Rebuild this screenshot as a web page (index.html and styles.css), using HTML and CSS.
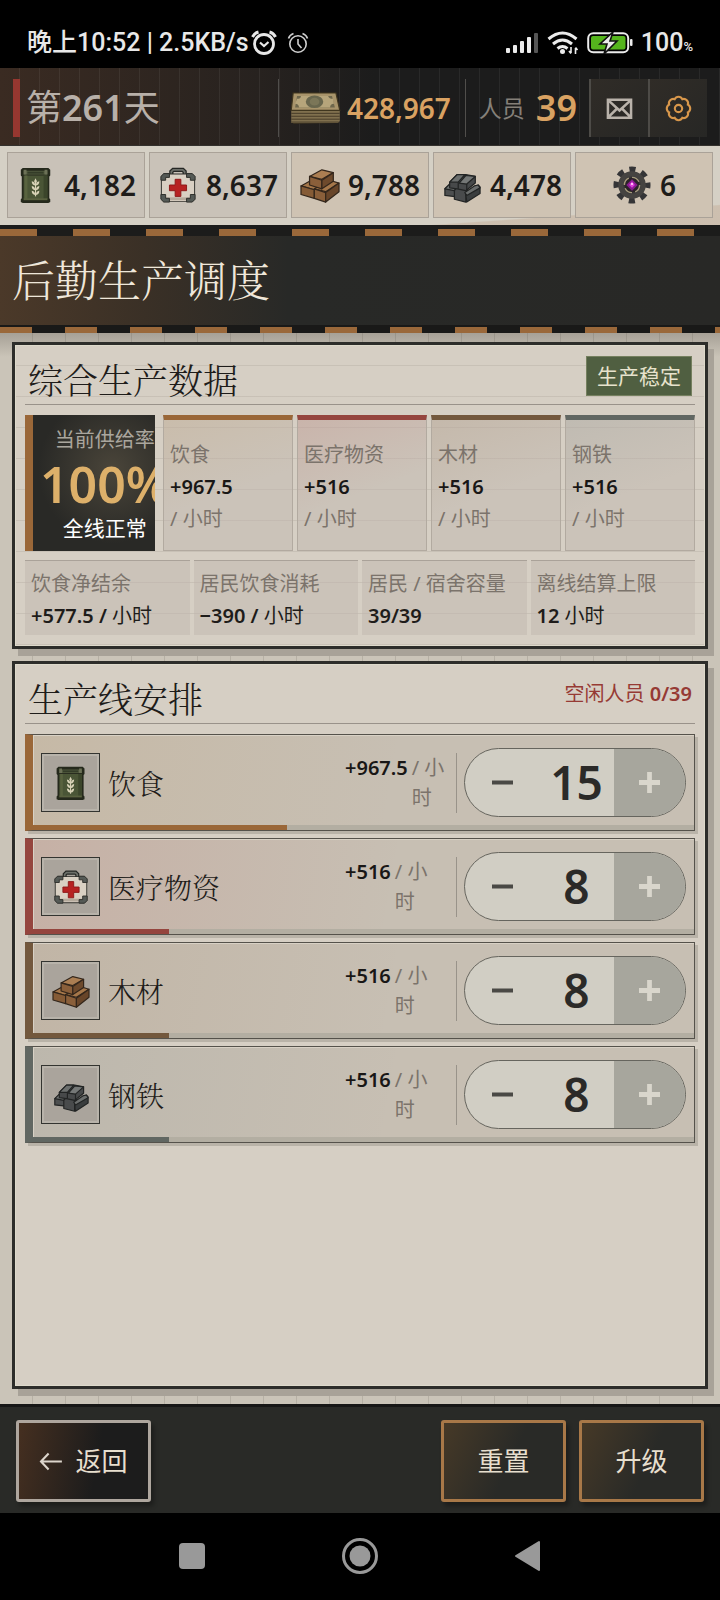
FILE: index.html
```html
<!DOCTYPE html>
<html lang="zh-CN">
<head>
<meta charset="utf-8">
<meta name="viewport" content="width=device-width, initial-scale=1">
<title>后勤生产调度</title>
<link rel="stylesheet" href="styles.css">
</head>
<body>
<svg class="sprite" aria-hidden="true">
  <symbol id="food" viewBox="0 0 40 40">
    <path d="M6 2h27l2 2v6l-1 1v23l1 1v3l-2 1H6l-2-1v-3l1-1V11L4 10V4z" fill="#25291c"/>
    <path d="M7 10h25v25H7z" fill="#4a5536"/>
    <path d="M8 10h3v25H8z" fill="#59633f"/><path d="M28 10h4v25h-4z" fill="#3b452b"/>
    <path d="M7 5h25v4H7z" fill="#525b3f"/><path d="M11 6h17v2H11z" fill="#343c28"/>
    <path d="M7 34h25v2H7z" fill="#59613f"/>
    <path d="M7 4h3v5H7zM29 4h3v5h-3z" fill="#6c7157"/>
    <path d="M19.500 15v17" stroke="#d9d3b8" stroke-width="1.200"/>
    <path d="M19.500 13l1.500 3-1.500 3-1.500-3zM15.500 16q4 1 3.500 4.500-3.500-.5-3.500-4.500zM23.500 16q-4 1-3.500 4.500 3.500-.5 3.500-4.500zM15.500 21q4 1 3.500 4.500-3.500-.5-3.500-4.500zM23.500 21q-4 1-3.500 4.500 3.500-.5 3.500-4.500zM15.500 26q4 1 3.500 4.500-3.500-.5-3.500-4.500zM23.500 26q-4 1-3.500 4.500 3.500-.5 3.500-4.500z" fill="#d9d3b8"/>
  </symbol>
  <symbol id="medic" viewBox="0 0 40 40">
    <path d="M13 9V6l2-2h10l2 2v3" fill="none" stroke="#252724" stroke-width="4.500"/>
    <path d="M13 9V6l2-2h10l2 2v3" fill="none" stroke="#6d706a" stroke-width="1.800"/>
    <path d="M5 8h30l3 3v24l-3 3H5l-3-3V11z" fill="#2c2d29"/>
    <path d="M5 9h30l2 2v24l-2 2H5l-2-2V11z" fill="#d9d0c3"/>
    <path d="M4 33h32v3H4z" fill="#b5aa9c"/>
    <path d="M2 15V11l3-3h6v4H7v3zM38 15V11l-3-3h-6v4h4v3zM2 30v5l3 3h6v-4H7v-4zM38 30v5l-3 3h-6v-4h4v-4z" fill="#555a56" stroke="#2c2d29"/>
    <path d="M17 14h6v6h6v6h-6v6h-6v-6h-6v-6h6z" fill="#b72222" stroke="#8b1818"/>
  </symbol>
  <symbol id="wood" viewBox="0 0 42 40">
    <g stroke="#33261b" stroke-width="1.300" stroke-linejoin="round">
      <path d="M1 21l9-5 9 3v4l-4 2z" fill="#a5774a"/><path d="M1 21l14 4v9L1 30z" fill="#855b36"/>
      <path d="M15 24l16-9 10 3-14 9z" fill="#a5774a"/><path d="M15 24l12 4v10l-12-4z" fill="#8a5f3a"/><path d="M27 28l14-10v9L27 38z" fill="#684529"/>
      <path d="M10 11l13-7 12 3-12 7z" fill="#ab7e52"/><path d="M10 11l13 4v9l-13-4z" fill="#8a5f3a"/><path d="M23 15l12-8v9l-12 8z" fill="#6e4a2c"/>
    </g>
  </symbol>
  <symbol id="steel" viewBox="0 0 42 40">
    <g stroke="#222424" stroke-width="1.300" stroke-linejoin="round">
      <path d="M3 24l5-4h12v13L3 31z" fill="#4d4f50"/><path d="M3 24l5-5 8 2-3 5z" fill="#707372"/>
      <path d="M13 26l3-4 11 3-2 4v9l-12-3z" fill="#494b4c"/><path d="M25 29l13-9 2 2v7L26 38z" fill="#3a3d3e"/><path d="M24 28l10-7 4-1 2 3-14 8z" fill="#6c6f6e"/>
      <path d="M8 17l8-8h9l10 2v7l-10 8-9-2-8-1z" fill="#47494a"/><path d="M8 17l8-8h8l-7 8z" fill="#6c6f6e"/><path d="M18 18l7-8 10 1-9 8z" fill="#757877"/><path d="M17 17v7M26 19v7"/>
    </g>
  </symbol>
  <symbol id="gear" viewBox="0 0 40 40">
    <circle cx="20" cy="20" r="16" fill="none" stroke="#353537" stroke-width="7" stroke-dasharray="6.280 6.280" stroke-dashoffset="3.140"/>
    <circle cx="20" cy="20" r="12" fill="#3d3b3b" stroke="#454341" stroke-width="5"/>
    <circle cx="20" cy="20" r="8" fill="#2a2328" stroke="#a79c7d" stroke-width="1.500" stroke-dasharray="9 3.500"/>
    <path d="M20 14l6 6-6 6-6-6z" fill="#8a1b91"/><path d="M20 16l3 4-3 3-3-3z" fill="#df3ddc"/>
    <path d="M19 18h2v2h-2z" fill="#ffc6f5"/>
  </symbol>
</svg>

<header class="status">
  <div class="status-side">
    <span>晚上10:52 | 2.5KB/s</span>
    <svg class="alarm" viewBox="0 0 26 26" fill="none" stroke="#e8e8e8"><circle cx="13" cy="14" r="9.500" stroke-width="2.800"/><path d="M1.500 7q2-4 6-5M24.500 7q-2-4-6-5" stroke-width="3"/><path d="M9 12.500l4 3.500 4.500-4" stroke-width="2.200"/></svg>
    <svg class="alarm alarm-small" viewBox="0 0 22 22" fill="none" stroke="#cfcfcf" stroke-width="1.600"><circle cx="11" cy="12" r="8.200"/><path d="M1.500 6.500q1-3.500 5-5M20.500 6.500q-1-3.500-5-5M11 7v5l3.500 4"/></svg>
  </div>
  <div class="status-side">
    <svg class="signal" viewBox="0 0 34 22"><g fill="#ececec"><rect x="1" y="16" width="4" height="5" rx="1"/><rect x="8" y="13" width="4" height="8" rx="1"/><rect x="15" y="9" width="4" height="12" rx="1"/><rect x="22" y="5" width="4" height="16" rx="1"/></g><rect x="29" y="1" width="4" height="20" rx="1" fill="#555"/></svg>
    <svg class="wifi" viewBox="0 0 32 24" fill="none" stroke="#ececec"><path d="M1.500 8q14-12 28 0M6 13q9.500-8 19 0M10.500 17.500q5-4 10 0" stroke-width="3"/><circle cx="15.500" cy="20.500" r="2.500" fill="#ececec" stroke="none"/><path d="M24 16v6m-2-2l2 2.500M28.500 23v-6m2 2l-2-2.500" stroke-width="1.600"/></svg>
    <svg class="battery" viewBox="0 0 46 22"><rect x="1.200" y="1.200" width="40" height="19" rx="5" fill="none" stroke="#ececec" stroke-width="2"/><rect x="4" y="4" width="34.500" height="13.500" rx="2" fill="#55b51d"/><rect x="43" y="7" width="2.500" height="7" rx="1" fill="#ececec"/><path d="M26 0L13 12h7l-3 10 13-13h-7z" fill="#ececec" stroke="#111" stroke-width="1.600"/></svg>
    <span>100<small>%</small></span>
  </div>
</header>

<div class="topbar">
  <div class="day"><span class="day-text">第<b>261</b>天</span></div>
  <div class="money">
    <svg class="cash" viewBox="0 0 52 34"><path d="M2 20L50 18l1 12-2 2-46 1z" fill="#3b3222"/><path d="M1 19h50v11l-2 2H1z" fill="#80704e"/><path d="M1 22h50M1 25h50M1 28h50M1 31h49" stroke="#463b27" stroke-width="1"/><path d="M3 1h44l4 18H1z" fill="#a8946b" stroke="#40361f" stroke-width="1.200"/><path d="M7 4h36l3 12H5z" fill="#6e674c"/><path d="M11 4h28q1 3 5 3l1 5q-4 0-4 4H9q0-4-4-4l2-5q4 0 4-3z" fill="#b6a57b"/><ellipse cx="25" cy="10" rx="9" ry="6.500" fill="#68664d"/><ellipse cx="25" cy="10" rx="5" ry="4" fill="#7b7658"/></svg>
    <b>428,967</b>
  </div>
  <div class="crew"><span>人员</span><b>39</b></div>
  <div class="tools">
    <button type="button" aria-label="邮件"><svg viewBox="0 0 28 28" fill="none" stroke="#b9b2aa" stroke-width="2.600"><path d="M2 5h24v18.500H2zM2.500 5.500L14 16 25.500 5.500M2.500 23l9-9M25.500 23l-9-9"/></svg></button>
    <button type="button" aria-label="设置"><svg viewBox="0 0 28 28" fill="none" stroke="#d8974b" stroke-width="2.200"><path d="M10 4.300a4.500 4.500 0 0 1 8 0a4.500 4.500 0 0 1 5.700 5.700a4.500 4.500 0 0 1 0 8a4.500 4.500 0 0 1-5.700 5.700a4.500 4.500 0 0 1-8 0a4.500 4.500 0 0 1-5.700-5.700a4.500 4.500 0 0 1 0-8a4.500 4.500 0 0 1 5.700-5.700z"/><circle cx="14" cy="14" r="3.800"/></svg></button>
  </div>
</div>

<div class="resources">
  <div class="resource"><svg><use href="#food"/></svg><b>4,182</b></div>
  <div class="resource"><svg><use href="#medic"/></svg><b>8,637</b></div>
  <div class="resource"><svg><use href="#wood"/></svg><b>9,788</b></div>
  <div class="resource"><svg><use href="#steel"/></svg><b>4,478</b></div>
  <div class="resource"><svg><use href="#gear"/></svg><b>6</b></div>
</div>

<div class="banner"><h1>后勤生产调度</h1></div>

<main>
  <section class="panel ruled">
    <div class="panel-head"><h2>综合生产数据</h2><span class="badge">生产稳定</span></div>
    <div class="output">
      <div class="supply"><div class="supply-text"><span class="supply-label">当前供给率</span><b>100%</b><span class="supply-state">全线正常</span></div></div>
      <div class="products">
        <div class="product food"><span>饮食</span><b>+967.5</b><span>/ 小时</span></div>
        <div class="product medic"><span>医疗物资</span><b>+516</b><span>/ 小时</span></div>
        <div class="product wood"><span>木材</span><b>+516</b><span>/ 小时</span></div>
        <div class="product steel"><span>钢铁</span><b>+516</b><span>/ 小时</span></div>
      </div>
    </div>
    <div class="stats">
      <div class="stat"><span>饮食净结余</span><p><b>+577.5 /</b> 小时</p></div>
      <div class="stat"><span>居民饮食消耗</span><p><b>−390 /</b> 小时</p></div>
      <div class="stat"><span>居民 / 宿舍容量</span><p><b>39/39</b></p></div>
      <div class="stat"><span>离线结算上限</span><p><b>12</b> 小时</p></div>
    </div>
  </section>

  <section class="panel lines-panel">
    <div class="panel-head"><h2>生产线安排</h2><span class="idle">空闲人员 <b>0/39</b></span></div>
    <div class="lines">
      <div class="line food">
        <div class="thumb"><svg><use href="#food"/></svg></div><h3>饮食</h3>
        <div class="rate"><b>+967.5</b><span>/ 小<br>时</span></div>
        <div class="control"><div class="stepper"><button type="button" aria-label="减少饮食人员"><svg viewBox="0 0 22 22"><path d="M0 11h22"/></svg></button><output>15</output><button type="button" class="plus" aria-label="增加饮食人员" disabled><svg viewBox="0 0 22 22"><path d="M0 11h22M11 0v22"/></svg></button></div></div>
        <div class="progress"><i style="width:38.500%"></i></div>
      </div>
      <div class="line medic">
        <div class="thumb"><svg><use href="#medic"/></svg></div><h3>医疗物资</h3>
        <div class="rate"><b>+516</b><span>/ 小<br>时</span></div>
        <div class="control"><div class="stepper"><button type="button" aria-label="减少医疗人员"><svg viewBox="0 0 22 22"><path d="M0 11h22"/></svg></button><output>8</output><button type="button" class="plus" aria-label="增加医疗人员" disabled><svg viewBox="0 0 22 22"><path d="M0 11h22M11 0v22"/></svg></button></div></div>
        <div class="progress"><i style="width:20.500%"></i></div>
      </div>
      <div class="line wood">
        <div class="thumb"><svg><use href="#wood"/></svg></div><h3>木材</h3>
        <div class="rate"><b>+516</b><span>/ 小<br>时</span></div>
        <div class="control"><div class="stepper"><button type="button" aria-label="减少木材人员"><svg viewBox="0 0 22 22"><path d="M0 11h22"/></svg></button><output>8</output><button type="button" class="plus" aria-label="增加木材人员" disabled><svg viewBox="0 0 22 22"><path d="M0 11h22M11 0v22"/></svg></button></div></div>
        <div class="progress"><i style="width:20.500%"></i></div>
      </div>
      <div class="line steel">
        <div class="thumb"><svg><use href="#steel"/></svg></div><h3>钢铁</h3>
        <div class="rate"><b>+516</b><span>/ 小<br>时</span></div>
        <div class="control"><div class="stepper"><button type="button" aria-label="减少钢铁人员"><svg viewBox="0 0 22 22"><path d="M0 11h22"/></svg></button><output>8</output><button type="button" class="plus" aria-label="增加钢铁人员" disabled><svg viewBox="0 0 22 22"><path d="M0 11h22M11 0v22"/></svg></button></div></div>
        <div class="progress"><i style="width:20.500%"></i></div>
      </div>
    </div>
  </section>
</main>

<footer class="actions">
  <button type="button" class="action back"><svg viewBox="0 0 24 20" fill="none" stroke="#dcd5cc" stroke-width="2.200"><path d="M24 10H2M10 1.500L2 10l8 8.500"/></svg><span>返回</span></button>
  <button type="button" class="action">重置</button>
  <button type="button" class="action">升级</button>
</footer>

<nav class="system">
  <svg viewBox="0 0 28 28"><rect x="1" y="1" width="26" height="26" rx="4" fill="#999"/></svg>
  <svg class="home" viewBox="0 0 36 36"><circle cx="18" cy="18" r="16.500" fill="none" stroke="#999" stroke-width="3"/><circle cx="18" cy="18" r="10.500" fill="#999"/></svg>
  <svg viewBox="0 0 28 32"><path d="M25 2v28L2 16z" fill="#999" stroke="#999" stroke-width="2" stroke-linejoin="round"/></svg>
</nav>
</body>
</html>
```
FILE: styles.css
```css
* { box-sizing: border-box; }
body {
  margin: 0;
  min-height: 100vh;
  display: flex;
  flex-direction: column;
  background: #000;
  color: #1e1c1a;
  font-family: "Noto Sans", "Noto Sans CJK SC", sans-serif;
  font-size: 20px;
  line-height: 32px;
}
h1, h2, h3, p { margin: 0; }
h1, h2, h3 { font-family: "Noto Serif CJK SC", "Noto Sans CJK SC", serif; font-weight: 300; }
b { font-weight: 600; }
button { margin: 0; padding: 0; border: 0; font: inherit; color: inherit; }
svg { display: block; flex: none; }
.sprite { position: absolute; width: 0; height: 0; }

.food { --tone: #9a6738; --wash: rgba(190, 145, 80, .13); }
.medic { --tone: #95453e; --wash: rgba(190, 80, 75, .13); }
.wood { --tone: #73583d; --wash: rgba(150, 110, 70, .12); }
.steel { --tone: #616762; --wash: rgba(95, 115, 115, .1); }

.status {
  display: flex;
  justify-content: space-between;
  padding: 27px 27px 9px;
  color: #e8e8e8;
  font-family: Roboto, "Noto Sans CJK SC", sans-serif;
  font-size: 25px;
  font-weight: 500;
}
.status-side { display: flex; align-items: center; gap: 8px; height: 32px; white-space: nowrap; }
.status small { font-size: 13px; line-height: 1; }
.alarm { width: 26px; height: 26px; margin-left: -6px; }
.alarm-small { width: 22px; height: 22px; margin-left: 2px; }
.signal { width: 34px; height: 22px; }
.wifi { width: 32px; height: 24px; }
.battery { width: 46px; height: 22px; }

.topbar {
  display: flex;
  align-items: stretch;
  padding: 11px 13px 8px;
  border-bottom: 1px solid #34312d;
  background:
    repeating-linear-gradient(90deg, transparent 0 19px, rgba(255, 255, 255, .06) 19px 20px),
    linear-gradient(90deg, #3a2b22, #27221f 36%, #1c1c1c 52%, #1c1c1c);
}
.day { flex: 1; border-left: 7px solid #963730; padding-left: 6px; font-size: 36px; line-height: 58px; color: #b8b0a9; white-space: nowrap; }
.money, .crew { display: flex; align-items: center; border-left: 1px solid #504e4b; color: #d9a262; }
.money { gap: 6px; padding: 0 14px 0 11px; font-size: 28px; }
.cash { width: 51px; height: 33px; }
.crew { gap: 11px; padding: 0 12px 0 13px; font-size: 36px; }
.crew span { font-size: 23px; color: #858079; }
.tools { display: flex; }
.tools button { display: grid; place-items: center; width: 59px; border-left: 2px solid #4d4b47; background: linear-gradient(135deg, #302c27, #272725); }
.tools svg { width: 27px; height: 27px; }

.resources {
  display: grid;
  grid-template-columns: repeat(5, 1fr);
  gap: 4px;
  padding: 6px 7px 7px;
  background: linear-gradient(176deg, transparent 84%, rgba(190, 160, 135, .35) 85%), #d5d0c5;
}
.resource {
  display: flex;
  align-items: center;
  justify-content: center;
  gap: 8px;
  height: 66px;
  border: 1px solid #aaa298;
  background: #c9c2b8;
  font-size: 28px;
}
.resource:nth-child(n+3) { background: #cfc3b3; }
.resource svg { width: 40px; height: 38px; }

.banner {
  border-top: 1px solid #1b1b1a;
  padding: 3px 0 4px;
  background:
    repeating-linear-gradient(90deg, #9a683a 0 37px, transparent 37px 73px) 0 3px / 100% 7px no-repeat,
    repeating-linear-gradient(90deg, #9a683a 0 32px, #191918 32px 65px) 0 100% / 100% 6px no-repeat,
    linear-gradient(#1c1c1b, #1c1c1b) 0 0 / 100% 10px no-repeat,
    linear-gradient(#191918, #191918) 0 100% / 100% 8px no-repeat,
    linear-gradient(90deg, #4b3929, #3a3026 20%, #282927 40%, #282826);
}
.banner h1 { padding: 0 12px; font-size: 43px; line-height: 100px; color: #efe7da; }

main {
  flex: 1;
  display: flex;
  flex-direction: column;
  gap: 12px;
  padding: 9px 12px 15px;
  background:
    linear-gradient(rgba(60, 55, 50, .25), transparent 24px),
    repeating-linear-gradient(90deg, transparent 0 32px, rgba(80, 75, 65, .16) 32px 33px),
    #cac4b8;
}
.panel {
  padding: 10px 10px 11px;
  border: 3px solid #2d2d2a;
  background-color: #d6cfc4;
  box-shadow: inset 0 0 0 1px #dedacb, 6px 7px 0 #a8a298;
}
.ruled { background-image: repeating-linear-gradient(transparent 0 20px, rgba(100, 90, 80, .12) 20px 21px, transparent 21px 31px); }
.lines-panel { flex: 1; }
.panel-head { display: flex; justify-content: space-between; align-items: flex-start; margin-bottom: 10px; border-bottom: 1px solid #99928a; white-space: nowrap; }
.panel-head h2 { padding-left: 3px; font-size: 35px; line-height: 49px; }
.badge { margin: 1px 3px 0 0; padding: 0 10px; border: 1px solid #75805f; background: #505f41; color: #e7e3cd; font-size: 21px; line-height: 38px; }
.idle { padding-right: 3px; color: #963a34; line-height: 40px; }

.output { display: grid; grid-template-columns: 130fr 532fr; gap: 8px; }
.supply { overflow: hidden; min-width: 0; border-left: 8px solid #9a6738; background: radial-gradient(circle at 65% 40%, #4a453a, #292926 65%); white-space: nowrap; }
.supply-text { display: flex; flex-direction: column; align-items: center; width: max-content; padding: 10px 0 8px 7px; color: #fff; line-height: 30px; }
.supply-label { color: #aaa69e; }
.supply b { font-size: 50px; line-height: 58px; color: #ddb06a; }
.supply-state { font-size: 21px; }
.products { display: grid; grid-template-columns: repeat(4, 1fr); gap: 4px; min-width: 0; }
.product {
  display: flex;
  flex-direction: column;
  justify-content: center;
  padding: 3px 0 0 6px;
  border: 1px solid #b2aaa0;
  border-top: 5px solid var(--tone);
  background: linear-gradient(160deg, var(--wash), transparent 55%), rgba(190, 180, 172, .45);
  color: #7b736b;
}
.product b { color: #191716; }
.stats { display: grid; grid-template-columns: repeat(4, 1fr); gap: 4px; margin-top: 9px; }
.stat { padding: 7px 0 3px 6px; border-top: 1px solid #aaa299; background: rgba(190, 180, 172, .45); white-space: nowrap; }
.stat span { color: #7b736b; }

.lines { display: flex; flex-direction: column; gap: 7px; }
.line {
  display: grid;
  grid-template-columns: 66px 1fr 111px 238px;
  align-items: center;
  padding-top: 12px;
  border: 1px solid #55524b;
  border-left: 8px solid var(--tone);
  background: linear-gradient(100deg, var(--wash), transparent 55%), #c7bfb3;
  box-shadow: inset 1px 1px 0 #d8d1c5, 3px 3px 0 rgba(100, 95, 85, .25);
}
.thumb { display: grid; place-items: center; width: 59px; height: 59px; margin-left: 8px; border: 1px solid #333430; background: #aaa49c; box-shadow: inset 0 0 0 2px #b8b3aa; }
.thumb svg { width: 38px; height: 36px; }
.line h3 { padding-left: 9px; font-size: 28px; line-height: 40px; white-space: nowrap; }
.rate { display: flex; align-items: baseline; gap: 4px; line-height: 30px; white-space: nowrap; }
.rate b { color: #191716; }
.rate span { color: #7b736b; }
.control { display: flex; align-items: center; gap: 7px; height: 71px; }
.control::before { content: ""; width: 1px; height: 60px; background: #99938a; }
.stepper { display: grid; grid-template-columns: 74px 75px 1fr; width: 222px; height: 69px; overflow: hidden; border: 1px solid #66655e; border-radius: 35px; background: #d1cec4; }
.stepper button { display: grid; place-items: center; background: transparent; }
.stepper button svg { width: 21px; height: 21px; fill: none; stroke: #4a4945; stroke-width: 4; }
.stepper .plus { background: #a7a69d; }
.stepper .plus svg { stroke: #d9d6cc; stroke-width: 5; }
.stepper output { font-size: 46px; font-weight: 600; line-height: 67px; text-align: center; color: #2b2a28; }
.progress { grid-column: 1 / -1; margin-top: 7px; height: 5px; background: #b3aea2; }
.progress i { display: block; height: 100%; background: var(--tone); }

.actions { display: flex; gap: 13px; padding: 13px 16px 11px; border-top: 3px solid #171716; background: #292a27; }
.action {
  display: flex;
  align-items: center;
  justify-content: center;
  gap: 13px;
  width: 125px;
  height: 82px;
  border: 3px solid #a87848;
  border-radius: 3px;
  background: linear-gradient(115deg, #463927, #292a27 55%);
  box-shadow: 3px 4px 4px rgba(0, 0, 0, .3);
  color: #e7dfce;
  font-size: 26px;
}
.back { width: 135px; margin-right: auto; border-color: #aea69e; background: linear-gradient(100deg, #452f20, #1c1c1c 60%); }
.back svg { width: 23px; height: 19px; }

.system { display: flex; justify-content: space-between; align-items: center; padding: 25px 178px 26px; }
.system svg { width: 28px; height: 32px; }
.system .home { width: 36px; height: 36px; }
```
